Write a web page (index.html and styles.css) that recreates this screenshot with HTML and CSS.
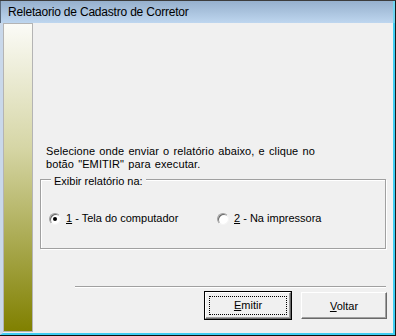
FILE: index.html
```html
<!DOCTYPE html>
<html lang="pt">
<head>
  <meta charset="UTF-8" />
  <title>Reletaorio de Cadastro de Corretor</title>
  <link rel="stylesheet" href="styles.css">
</head>
<body>

<div class="window">
  <div class="titlebar">Reletaorio de Cadastro de Corretor</div>
  <div class="client">
    <div class="side-panel"></div>
    <div class="content">
      <p class="intro">Selecione onde enviar o relatório abaixo, e clique no<br>botão "EMITIR" para executar.</p>

      <fieldset class="group">
        <legend>Exibir relatório na:</legend>
        <div class="radio-row">
          <label class="radio checked"><span class="radio-box"></span><span><u>1</u> - Tela do computador</span></label>
          <label class="radio"><span class="radio-box"></span><span><u>2</u> - Na impressora</span></label>
        </div>
      </fieldset>

      <div class="separator"></div>

      <div class="buttons">
        <button class="btn default"><span class="focus"><u>E</u>mitir</span></button>
        <button class="btn"><span><u>V</u>oltar</span></button>
      </div>
    </div>
  </div>
</div>

</body>
</html>
```

FILE: styles.css
```css
html, body {
  margin: 0;
  padding: 0;
  background: #f0f0f0;
}

body {
  font-family: 'Liberation Sans', Arial, sans-serif;
  font-size: 11px;
  color: #000;
}

.window {
  width: 396px;
  height: 336px;
  box-sizing: border-box;
  border-top: 1px solid #3c3c3c;
  border-right: 1px solid #1a1a1a;
  border-bottom: 1px solid #101010;
  display: flex;
  flex-direction: column;
}

.titlebar {
  height: 22px;
  line-height: 22px;
  padding-left: 7px;
  font-size: 12px;
  letter-spacing: -0.2px;
  background: linear-gradient(#96b0cd, #bed6ef);
  border-left: 1px solid #5a6a7c;
  border-right: 2px solid #6fd6f2;
}

.client {
  flex: 1;
  display: flex;
  border-left: 3px solid #c9d8ea;
  border-right: 2px solid #3fcdf2;
  border-bottom: 2px solid #3fcdf2;
  background: #f0f0f0;
}

.side-panel {
  width: 29px;
  margin-bottom: 1px;
  border: 1px solid #b4b4b4;
  background: linear-gradient(#fbfbf7, #d6d6a6 40%, #808000);
}

.content {
  flex: 1;
  padding-top: 122px;
}

.intro {
  margin: 0 0 0 13px;
  line-height: 13px;
  word-spacing: 1px;
  letter-spacing: 0.1px;
}

.group {
  margin: 0 7px;
  padding: 24px 0 23px;
  border: 1px solid #a0a0a0;
  box-shadow: inset 1px 1px 0 #fff, 1px 1px 0 #fff;
}

.group legend {
  margin-left: 10px;
  padding: 4px 3px 0;
  line-height: 13px;
  background: #f0f0f0;
}

.radio-row {
  display: flex;
  padding-left: 8px;
}

.radio {
  display: flex;
  align-items: center;
  line-height: 13px;
  width: 168px;
}

.radio-box {
  position: relative;
  width: 10px;
  height: 10px;
  margin-right: 5px;
  border-radius: 50%;
  background: #fff;
  border: 1px solid;
  border-color: #a0a0a0 #f4f4f4 #f4f4f4 #a0a0a0;
  box-shadow: inset 1px 1px 0 #696969;
}

.radio.checked .radio-box::after {
  content: "";
  position: absolute;
  left: 3px;
  top: 3px;
  width: 4px;
  height: 4px;
  border-radius: 50%;
  background: #000;
}

.separator {
  margin: 37px 7px 0 42px;
  border-top: 1px solid #a0a0a0;
  border-bottom: 1px solid #fff;
}

.buttons {
  display: flex;
  justify-content: flex-end;
  gap: 10px;
  margin: 4px 6px 0 0;
}

.btn {
  width: 86px;
  height: 27px;
  padding: 0;
  font: inherit;
  color: #000;
  background: #f0f0f0;
  border: 1px solid;
  border-color: #fff #696969 #696969 #fff;
  box-shadow: inset -1px -1px 0 #a0a0a0;
  display: flex;
  align-items: center;
  justify-content: center;
}

.btn.default {
  outline: 1px solid #000;
  outline-offset: 0;
}

.focus {
  box-sizing: border-box;
  width: 78px;
  height: 19px;
  line-height: 17px;
  border: 1px dotted #000;
  text-align: center;
}
```
